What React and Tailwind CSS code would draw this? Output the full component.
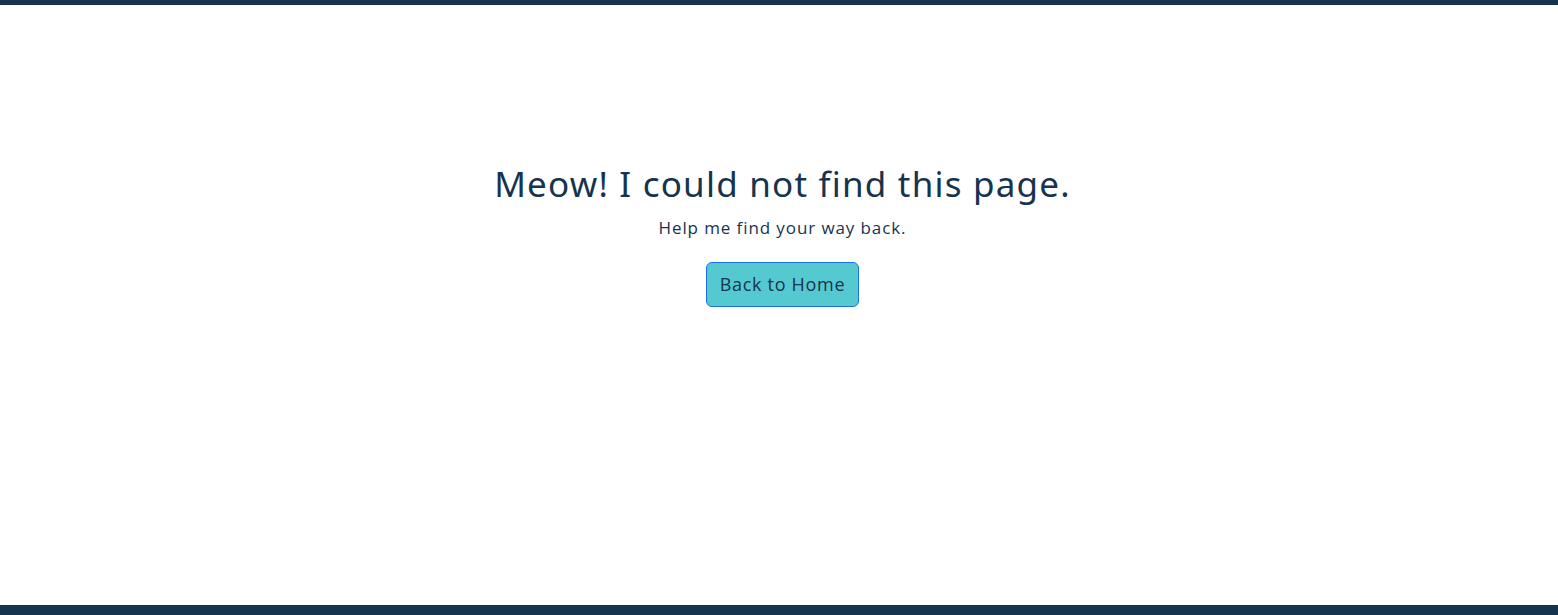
import React from "react";

const NotFound = () => {
  return (
    <div
      className="min-h-screen flex flex-col bg-white text-[#17344f]"
      style={{ fontFamily: "'Open Sans', Lato, sans-serif" }}
    >
      <div className="h-[5px] bg-[#17344f]" />
      <main className="flex-1 flex flex-col items-center pt-[157px] pl-[7px]">
        <h1
          className="text-[35px] leading-[44px] font-normal tracking-[1.2px]"
          style={{ fontFamily: "'Noto Sans', sans-serif" }}
        >
          Meow! I could not find this page.
        </h1>
        <p className="mt-[10px] text-[17px] leading-[24px] tracking-[0.9px]">Help me find your way back.</p>
        <a
          href="/"
          className="mt-[22px] h-[45px] px-[13px] flex items-center rounded-[6px] border border-[#1a6fe6] bg-[#55c9d0] text-[18px] tracking-[0.7px] text-[#17344f]"
        >
          Back to Home
        </a>
      </main>
      <div className="h-[10px] bg-[#17344f]" />
    </div>
  );
};

export default function App() {
  return <NotFound />;
}
